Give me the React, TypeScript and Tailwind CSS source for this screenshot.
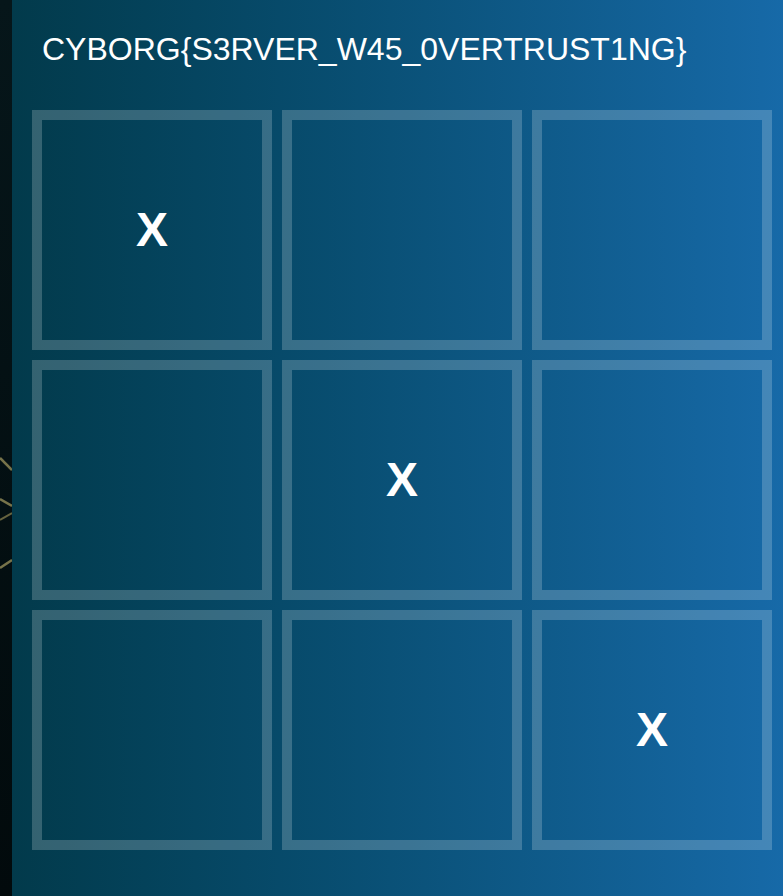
const cells = ['X', '', '', '', 'X', '', '', '', 'X'];

function WebStrip() {
  return (
    <svg className="absolute inset-0 h-full w-full" preserveAspectRatio="none" viewBox="0 0 12 896">
      <line x1="0" y1="458" x2="12" y2="470" stroke="#77734a" strokeWidth="2.5" />
      <line x1="0" y1="499" x2="12" y2="506" stroke="#77734a" strokeWidth="2.5" />
      <line x1="0" y1="520" x2="12" y2="513" stroke="#66633f" strokeWidth="2" />
      <line x1="0" y1="568" x2="12" y2="560" stroke="#77734a" strokeWidth="2.5" />
    </svg>
  );
}

export default function App() {
  return (
    <div className="flex min-h-screen w-full overflow-hidden font-['Liberation_Sans',Arial,sans-serif]">
      <div className="relative w-[12px] shrink-0 bg-gradient-to-b from-[#06161a] to-[#020a0c]">
        <WebStrip />
      </div>

      <div className="flex-1 bg-gradient-to-r from-[#023a4b] to-[#176aa9] px-[20px] pt-[20px] pb-[46px]">
        <h1 className="pl-[10px] pt-[11px] text-[32px] leading-[36px] font-normal text-white">
          CYBORG{'{'}S3RVER_W45_0VERTRUST1NG{'}'}
        </h1>

        <div className="mt-[43px] grid grid-cols-[240px_240px_240px] gap-[10px]">
          {cells.map((mark, i) => (
            <div
              key={i}
              className="flex h-[240px] items-center justify-center border-[10px] border-white/20 text-[48px] font-bold text-white"
            >
              {mark}
            </div>
          ))}
        </div>
      </div>
    </div>
  );
}
